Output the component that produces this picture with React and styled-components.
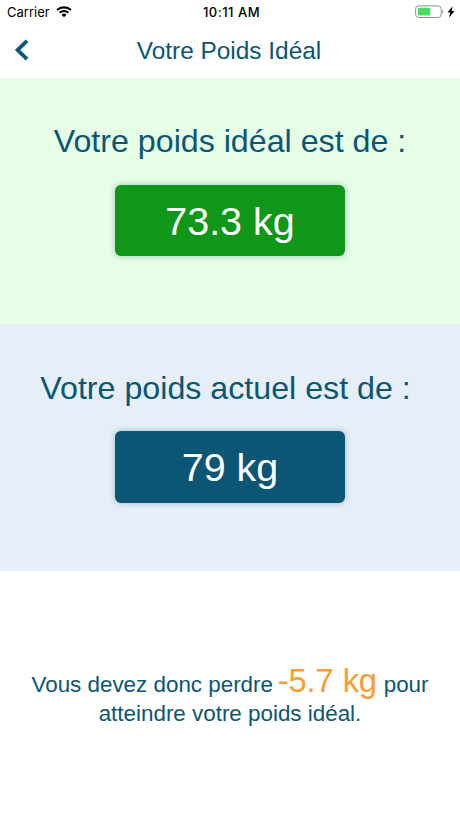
import React from 'react';
import styled, { createGlobalStyle } from 'styled-components';

const colors = {
  blue: '#0b5674',
  paleBlue: '#e6eff7',
  green: '#109618',
  paleGreen: '#e6fee6',
  orange: '#fb9c30',
};

const GlobalStyle = createGlobalStyle`
  * {
    box-sizing: border-box;
  }
  body {
    margin: 0;
    background: white;
    font-family: 'Liberation Sans', Arial, sans-serif;
  }
`;

const Screen = styled.div`
  display: flex;
  flex-direction: column;
  height: 818px;
  overflow: hidden;
  color: ${colors.blue};
`;

const StatusBar = styled.div`
  display: grid;
  grid-template-columns: 1fr auto 1fr;
  align-items: center;
  height: 24px;
  padding: 0 5px 0 7px;
  color: black;
  font-family: Inter, sans-serif;
  font-size: 13px;
  line-height: 24px;
`;

const Carrier = styled.div`
  display: flex;
  align-items: center;
  gap: 6px;
`;

const Time = styled.div`
  padding-left: 1px;
  font-weight: 500;
  letter-spacing: 0.5px;
`;

const Battery = styled.div`
  display: flex;
  align-items: center;
  justify-content: flex-end;
  gap: 3px;
`;

const NavBar = styled.div`
  display: grid;
  grid-template-columns: 44px 1fr 46px;
  align-items: center;
  height: 54px;
`;

const BackButton = styled.button`
  display: flex;
  padding: 0 0 2px 13px;
  border: none;
  background: none;
`;

const Title = styled.h1`
  margin: 0;
  text-align: center;
  font-size: 24.4px;
  font-weight: normal;
  line-height: 54px;
  white-space: nowrap;
`;

const WeightSection = styled.section`
  display: flex;
  flex-direction: column;
  align-items: center;
  height: ${(props) => props.$height}px;
  padding-top: ${(props) => props.$top}px;
  background: ${(props) => props.$background};
`;

const Label = styled.h2`
  margin: 0 0 23.5px;
  font-size: 32.2px;
  font-weight: normal;
  line-height: 40px;
  white-space: nowrap;
`;

const Weight = styled.div`
  width: 230px;
  height: 71.5px;
  border-radius: 6px;
  background: ${(props) => props.$background};
  box-shadow: 0 0 6px rgba(11, 86, 116, 0.35);
  color: white;
  text-align: center;
  font-size: 39.5px;
  line-height: 73px;
`;

const Advice = styled.p`
  margin: 95px 0 0;
  text-align: center;
  font-size: 22.4px;
  line-height: 29px;
`;

const Difference = styled.span`
  margin: 0 0.5px 0 -1.5px;
  color: ${colors.orange};
  font-size: 32.7px;
  letter-spacing: -0.1px;
`;

const WifiIcon = () => (
  <svg width="16" height="12" viewBox="0 0 16 12">
    <path d="M1 4.1a10.3 10.3 0 0 1 14 0" fill="none" stroke="black" strokeWidth="2.1" />
    <path d="M3.5 6.8a6.6 6.6 0 0 1 9 0" fill="none" stroke="black" strokeWidth="1.9" />
    <path d="M5.5 8.7a3.8 3.8 0 0 1 5 0L8 11.2z" />
  </svg>
);

const BatteryIcon = () => (
  <svg width="29" height="14" viewBox="0 0 29 14">
    <rect x="0.6" y="0.9" width="25.6" height="11.6" rx="3" fill="white" stroke="#929292" />
    <rect x="2.8" y="2.8" width="12.6" height="7.8" rx="1" fill="#4cd964" />
    <path d="M27.3 4.7v4c1.5-.7 1.5-3.3 0-4z" fill="#929292" />
  </svg>
);

const BoltIcon = () => (
  <svg width="8" height="12" viewBox="0 0 8 12">
    <path d="M5.6 0.3L0.5 6.6h2.7L2 11.5 7.6 4.9H4.7z" />
  </svg>
);

const BackIcon = () => (
  <svg width="16" height="22" viewBox="0 0 16 22">
    <path d="M14 1.8L4.6 11l9.4 9.2" fill="none" stroke={colors.blue} strokeWidth="3.8" />
  </svg>
);

const App = () => (
  <>
    <GlobalStyle />
    <Screen>
      <StatusBar>
        <Carrier>
          Carrier
          <WifiIcon />
        </Carrier>
        <Time>10:11 AM</Time>
        <Battery>
          <BatteryIcon />
          <BoltIcon />
        </Battery>
      </StatusBar>
      <NavBar>
        <BackButton aria-label="Retour">
          <BackIcon />
        </BackButton>
        <Title>Votre Poids Idéal</Title>
      </NavBar>
      <WeightSection $height={246} $top={43} $background={colors.paleGreen}>
        <Label>Votre poids idéal est de :</Label>
        <Weight $background={colors.green}>73.3 kg</Weight>
      </WeightSection>
      <WeightSection $height={247} $top={43.7} $background={colors.paleBlue}>
        <Label>Votre poids actuel est de :&nbsp;</Label>
        <Weight $background={colors.blue}>79 kg</Weight>
      </WeightSection>
      <Advice>
        Vous devez donc perdre <Difference>-5.7 kg</Difference> pour
        <br />
        atteindre votre poids idéal.
      </Advice>
    </Screen>
  </>
);

export default App;
